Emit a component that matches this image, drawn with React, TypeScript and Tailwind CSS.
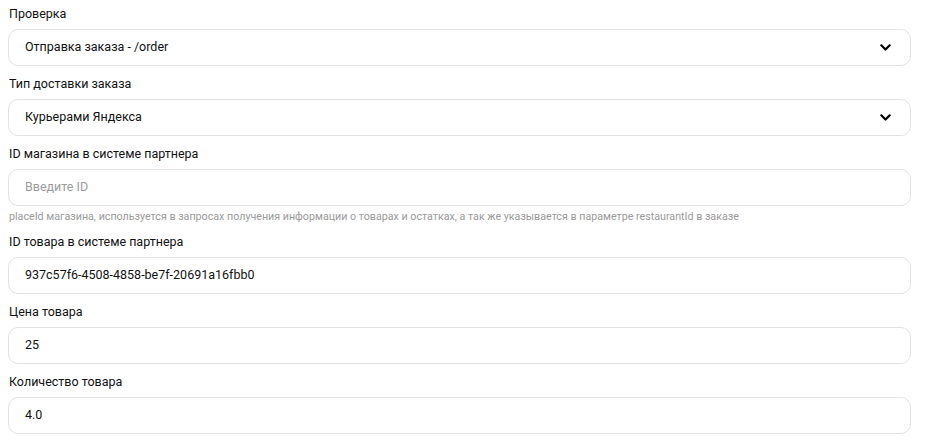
const FIELDS = [
  { label: "Проверка", value: "Отправка заказа - /order", select: true },
  { label: "Тип доставки заказа", value: "Курьерами Яндекса", select: true },
  {
    label: "ID магазина в системе партнера",
    placeholder: "Введите ID",
    hint: "placeId магазина, используется в запросах получения информации о товарах и остатках, а так же указывается в параметре restaurantId в заказе",
  },
  { label: "ID товара в системе партнера", value: "937c57f6-4508-4858-be7f-20691a16fbb0" },
  { label: "Цена товара", value: "25" },
  { label: "Количество товара", value: "4.0" },
];

function Chevron() {
  return (
    <svg width="11" height="7" viewBox="0 0 11 7" fill="none" className="shrink-0">
      <path d="M1.3 1.3L5.5 5.5L9.7 1.3" stroke="#000" strokeWidth="2.2" strokeLinecap="round" strokeLinejoin="round" />
    </svg>
  );
}

export default function App() {
  return (
    <div className="w-[927px] h-[445px] bg-white overflow-hidden pt-1 px-2 font-['Roboto',sans-serif] text-[#000]">
      <div className="flex flex-col gap-2 w-[903px]">
        {FIELDS.map((f) => (
          <div key={f.label} className="flex flex-col">
            <label className="text-[12.5px] leading-5 text-[#111] mb-[5px] pl-[1px]">{f.label}</label>
            <div className="h-[37px] flex items-center justify-between border border-[#e2e2e2] rounded-[10px] bg-white pl-4 pr-[19px]">
              {f.value ? (
                <span className="text-[12.5px] text-[#111]">{f.value}</span>
              ) : (
                <span className="text-[12.5px] text-[#9b9b9b]">{f.placeholder}</span>
              )}
              {f.select && <Chevron />}
            </div>
            {f.hint && (
              <p className="mt-1 text-[10.7px] leading-[14px] text-[#9a9a9a] pl-[1px]">{f.hint}</p>
            )}
          </div>
        ))}
      </div>
    </div>
  );
}
